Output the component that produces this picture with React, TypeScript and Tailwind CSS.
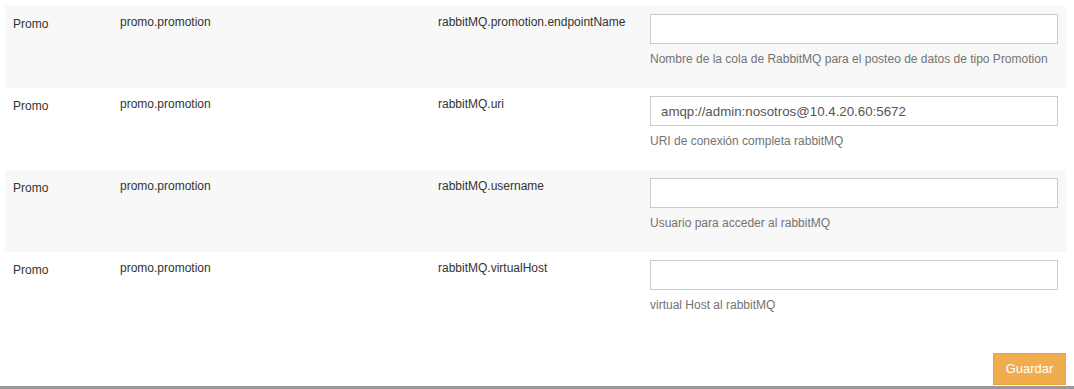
const rows = [
  {
    key: 'rabbitMQ.promotion.endpointName',
    value: '',
    help: 'Nombre de la cola de RabbitMQ para el posteo de datos de tipo Promotion',
  },
  {
    key: 'rabbitMQ.uri',
    value: 'amqp://admin:nosotros@10.4.20.60:5672',
    help: 'URI de conexión completa rabbitMQ',
  },
  { key: 'rabbitMQ.username', value: '', help: 'Usuario para acceder al rabbitMQ' },
  { key: 'rabbitMQ.virtualHost', value: '', help: 'virtual Host al rabbitMQ' },
]

export default function App() {
  return (
    <div className="w-[1074px] h-[389px] bg-white overflow-hidden font-['Liberation_Sans',Arial,sans-serif] text-[12px] text-[#333]">
      <div className="pt-[6px] pl-[5px] pr-[8px]">
        {rows.map((row, i) => (
          <div
            key={row.key}
            className={`flex h-[82px] ${i % 2 === 0 ? 'bg-[#f8f8f8]' : 'bg-white'}`}
          >
            <div className="w-[115px] pl-[8px] pt-[9px]">Promo</div>
            <div className="w-[318px] pt-[7px]">promo.promotion</div>
            <div className="w-[212px] pt-[7px]">{row.key}</div>
            <div className="w-[408px] pt-[8px]">
              <input
                readOnly
                value={row.value}
                className="w-full h-[30px] border border-[#ccc] bg-white px-[10px] text-[13.3px] text-[#555] outline-none"
              />
              <p className="mt-[6px] text-[#737373]">{row.help}</p>
            </div>
          </div>
        ))}
      </div>
      <div className="flex justify-end pr-[8px] pt-[19px]">
        <button className="h-[32px] w-[73px] bg-[#f0ad4e] border border-[#eea236] text-white text-[13px]">
          Guardar
        </button>
      </div>
      <div className="h-[3px] bg-[#999] mt-px" />
    </div>
  )
}
